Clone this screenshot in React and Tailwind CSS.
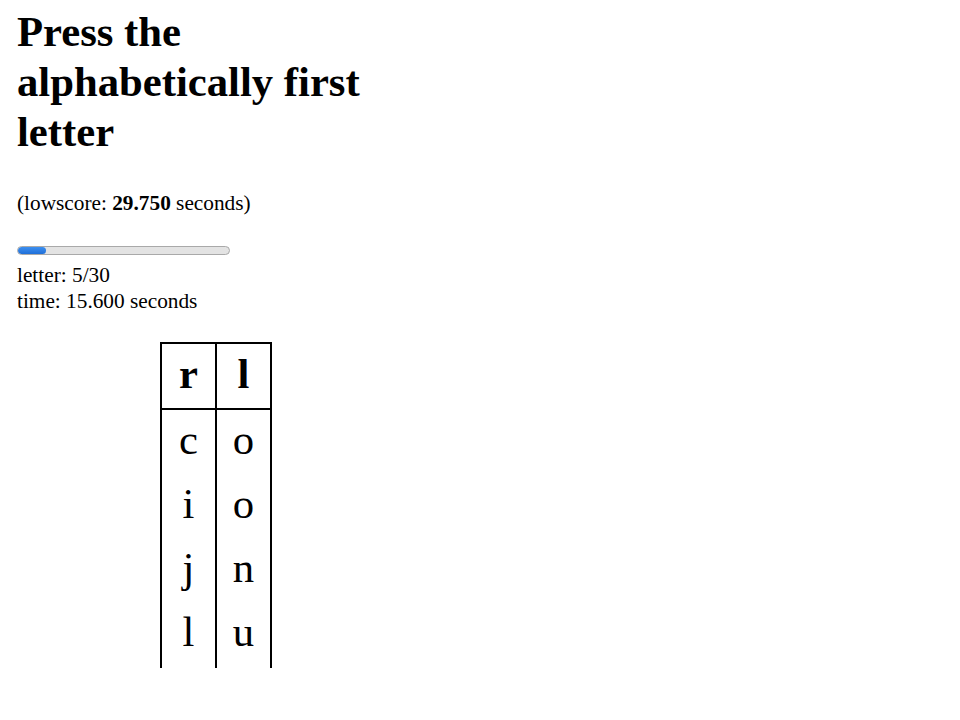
export default function App() {
  const rows = [
    ["c", "o"],
    ["i", "o"],
    ["j", "n"],
    ["l", "u"],
    ["", ""],
  ];
  const done = 4;
  const total = 30;
  return (
    <div className="min-h-[720px] bg-white text-black font-['Liberation_Serif',serif]">
      <div className="px-[17px] pt-[7px]">
        <h1 className="w-[400px] text-[42.7px] leading-[50px] font-bold">
          Press the alphabetically first letter
        </h1>
        <p className="mt-[33px] text-[21.3px] leading-[26px]">
          (lowscore: <b>29.750</b> seconds)
        </p>
        <div className="mt-[30px] h-[9px] w-[213px] overflow-hidden rounded-full border border-[#a9a9a9] bg-[#e3e3e3]">
          <div
            className="h-full rounded-full bg-gradient-to-b from-[#3d8ff0] to-[#1f6fd8]"
            style={{ width: `${(done / total) * 100}%` }}
          />
        </div>
        <div className="mt-[7px] text-[21.3px] leading-[26px]">
          <div>letter: 5/30</div>
          <div>time: 15.600 seconds</div>
        </div>
      </div>
      <div className="ml-[160px] mt-[28px] h-[326px] w-fit overflow-hidden">
        <div className="flex border-y-2 border-l-2 border-black">
          {["r", "l"].map((h, i) => (
            <div
              key={i}
              className="flex h-[64px] w-[55px] items-center justify-center border-r-2 border-black pb-[6px] text-[42.7px] font-bold leading-[49px]"
            >
              {h}
            </div>
          ))}
        </div>
        {rows.map((r, ri) => (
          <div key={ri} className="flex border-l-2 border-black">
            {r.map((c, ci) => (
              <div
                key={ci}
                className="flex h-[64px] w-[55px] items-center justify-center border-r-2 border-black pb-[6px] text-[42.7px] leading-[49px]"
              >
                {c}
              </div>
            ))}
          </div>
        ))}
      </div>
    </div>
  );
}
